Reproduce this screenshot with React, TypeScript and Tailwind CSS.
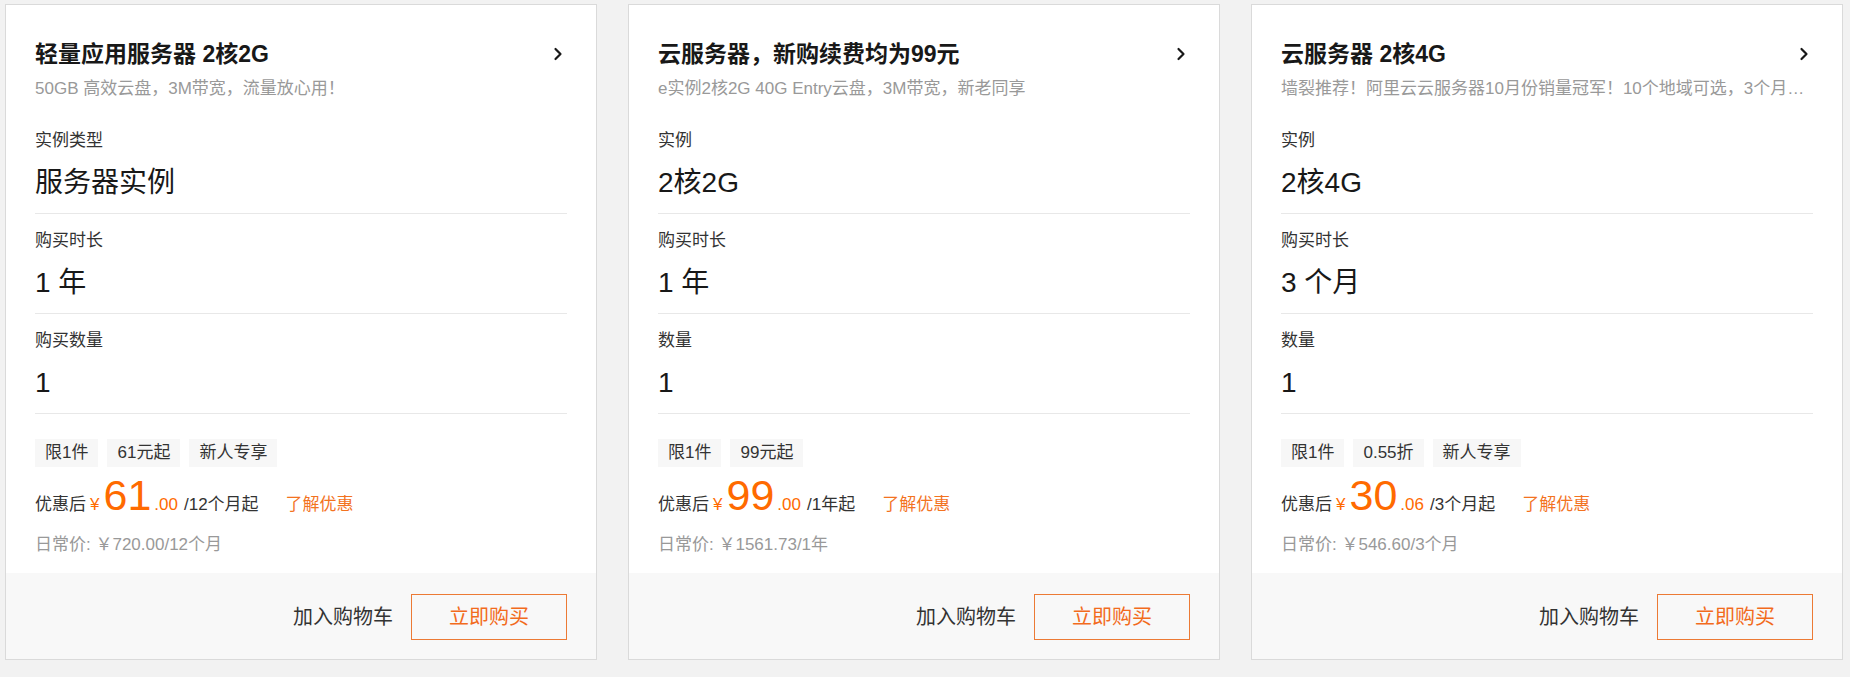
import type { ReactNode } from 'react'

type Offer = {
  title: string
  subtitle: string
  rows: [string, string][]
  tags: string[]
  int: string
  dec: string
  unit: string
  normal: string
}

const OFFERS: Offer[] = [
  {
    title: '轻量应用服务器 2核2G',
    subtitle: '50GB 高效云盘，3M带宽，流量放心用！',
    rows: [
      ['实例类型', '服务器实例'],
      ['购买时长', '1 年'],
      ['购买数量', '1'],
    ],
    tags: ['限1件', '61元起', '新人专享'],
    int: '61',
    dec: '.00',
    unit: '/12个月起',
    normal: '日常价: ￥720.00/12个月',
  },
  {
    title: '云服务器，新购续费均为99元',
    subtitle: 'e实例2核2G 40G Entry云盘，3M带宽，新老同享',
    rows: [
      ['实例', '2核2G'],
      ['购买时长', '1 年'],
      ['数量', '1'],
    ],
    tags: ['限1件', '99元起'],
    int: '99',
    dec: '.00',
    unit: '/1年起',
    normal: '日常价: ￥1561.73/1年',
  },
  {
    title: '云服务器 2核4G',
    subtitle: '墙裂推荐！阿里云云服务器10月份销量冠军！10个地域可选，3个月起购',
    rows: [
      ['实例', '2核4G'],
      ['购买时长', '3 个月'],
      ['数量', '1'],
    ],
    tags: ['限1件', '0.55折', '新人专享'],
    int: '30',
    dec: '.06',
    unit: '/3个月起',
    normal: '日常价: ￥546.60/3个月',
  },
]

function Chevron() {
  return (
    <svg width="10" height="16" viewBox="0 0 10 16" className="shrink-0">
      <polyline
        points="2.5,3 7.5,8 2.5,13"
        fill="none"
        stroke="#181818"
        strokeWidth="2.2"
        strokeLinecap="round"
        strokeLinejoin="round"
      />
    </svg>
  )
}

function Row({ label, value }: { label: string; value: ReactNode }) {
  return (
    <div className="border-b border-[#e8e8e8] pt-[15px] pb-[10px]">
      <div className="text-[17px] leading-[24px] text-[#333]">{label}</div>
      <div className="mt-[10px] text-[28px] leading-[40px] text-[#181818]">{value}</div>
    </div>
  )
}

function OfferCard({ offer }: { offer: Offer }) {
  return (
    <div className="flex w-[592px] flex-col border border-[#dadada] bg-white">
      <div className="px-[29px] pt-[33px] pb-[16px]">
        <div className="flex items-center justify-between pr-[4px]">
          <h3 className="text-[23px] font-bold leading-[32px] text-[#181818]">{offer.title}</h3>
          <Chevron />
        </div>
        <p className="mt-[7px] truncate text-[17px] leading-[24px] text-[#999]">{offer.subtitle}</p>

        <div className="mt-[13px]">
          {offer.rows.map(([l, v]) => (
            <Row key={l} label={l} value={v} />
          ))}
        </div>

        <div className="mt-[25px] flex gap-[9px]">
          {offer.tags.map((t) => (
            <span key={t} className="bg-[#f7f7f7] px-[10px] text-[17px] leading-[28px] text-[#333]">
              {t}
            </span>
          ))}
        </div>

        <div className="mt-[7px] flex items-baseline text-[17px] leading-[42px]">
          <span className="text-[#333]">优惠后</span>
          <span className="ml-[4px] text-[#ff6a00]">¥</span>
          <span className="ml-[4px] text-[43px] leading-[42px] text-[#ff6a00]">{offer.int}</span>
          <span className="ml-[3px] text-[#ff6a00]">{offer.dec}</span>
          <span className="ml-[6px] text-[#333]">{offer.unit}</span>
          <a className="ml-[27px] text-[#f3731f]" href="#">
            了解优惠
          </a>
        </div>

        <div className="mt-[7px] text-[17px] leading-[24px] text-[#999]">{offer.normal}</div>
      </div>

      <div className="flex items-center justify-end gap-[18px] bg-[#f8f8f8] pt-[21px] pr-[29px] pb-[19px]">
        <button type="button" className="text-[20px] leading-[28px] text-[#333]">
          加入购物车
        </button>
        <button
          type="button"
          className="h-[46px] w-[156px] border border-[#ec7a35] text-[20px] text-[#f26b1d]"
        >
          立即购买
        </button>
      </div>
    </div>
  )
}

export default function App() {
  return (
    <div
      className="min-h-[677px] bg-[#f2f2f2] pt-[4px] pl-[5px]"
      style={{ fontFamily: '"Liberation Sans", "Noto Sans CJK SC", sans-serif' }}
    >
      <div className="flex gap-[31px]">
        {OFFERS.map((o) => (
          <OfferCard key={o.title} offer={o} />
        ))}
      </div>
    </div>
  )
}
